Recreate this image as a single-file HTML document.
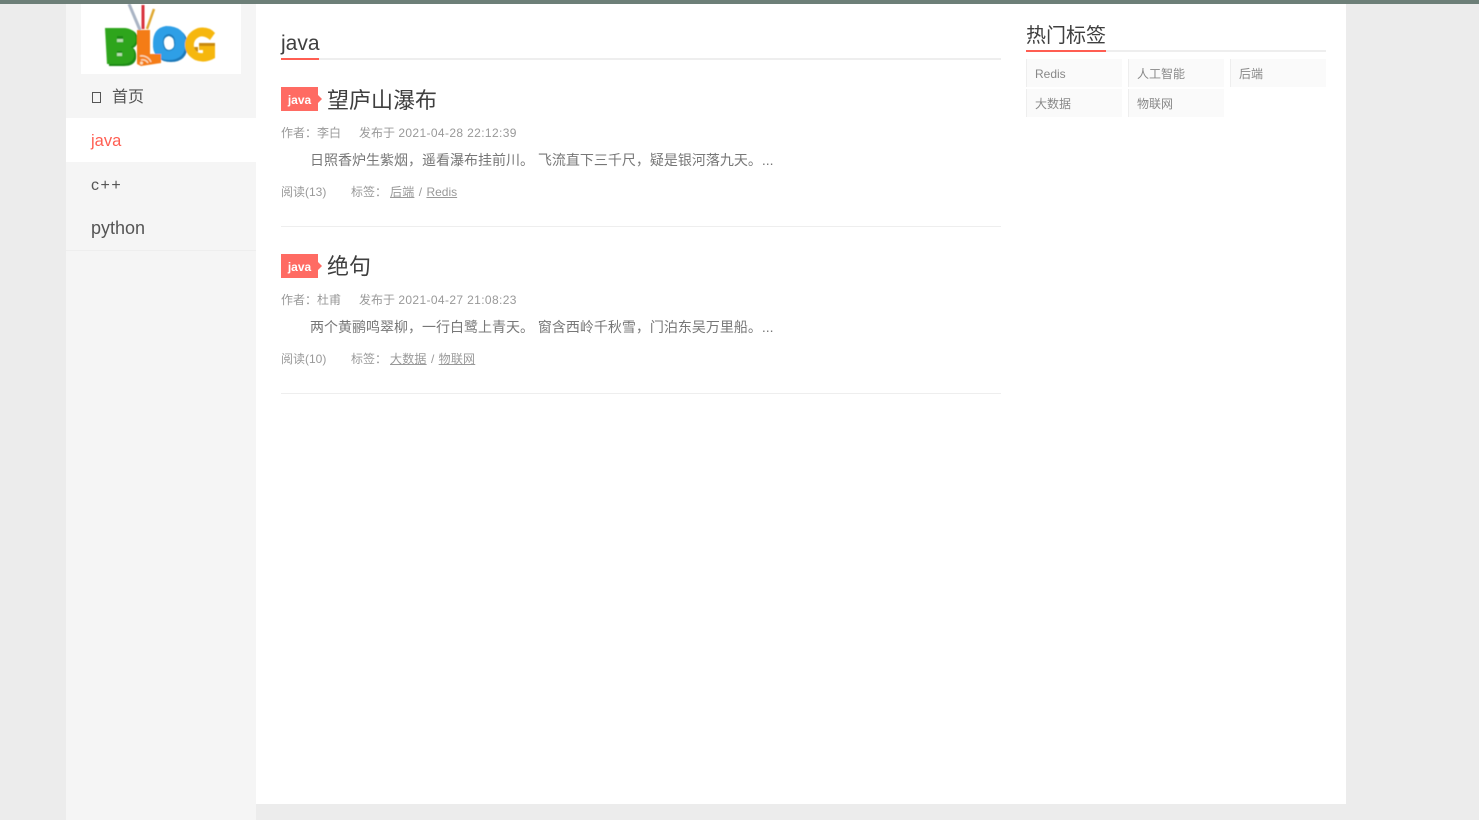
<!DOCTYPE html>
<html lang="zh">
<head>
<meta charset="utf-8">
<title>java</title>
<style>
html,body{margin:0;padding:0}
body{width:1479px;height:820px;overflow:hidden;background:#ececec;position:relative;font-family:"Liberation Sans","Noto Sans CJK SC",sans-serif;color:#555}
.a{position:absolute;white-space:nowrap}
#top{left:0;top:0;width:1479px;height:4px;background:#6d7f78}
#side{left:66px;top:4px;width:190px;height:816px;background:#f5f5f5}
#main{left:256px;top:4px;width:1090px;height:800px;background:#fff}
#logo{left:81px;top:4px;width:160px;height:70px;background:#fff;overflow:hidden}
.nav{left:91px;font-size:18px;line-height:24px;color:#555}
.bar{height:2px;background:#eee}
.red{height:2px;background:#ff5e52}
.tag{left:281px;width:37px;height:24px;background:#ff6b63;color:#fff;font-size:12px;font-weight:bold;line-height:26px;text-align:center}
.tag:after{content:"";position:absolute;left:37px;top:8px;border-left:4px solid #ff6b63;border-top:4px solid transparent;border-bottom:4px solid transparent}
.t{left:327px;font-size:22px;line-height:30px;color:#3f3f3f}
.m{font-size:12px;line-height:18px;color:#999}
.m a{color:#999;text-decoration:underline;letter-spacing:.2px}
.m i{font-style:normal;letter-spacing:.37px}
.m s{text-decoration:none;margin:0 1px 0 1px}
.d{left:310px;font-size:14px;line-height:20px;color:#777}
.hr{left:281px;width:720px;height:1px;background:#eee}
.h{font-size:12px;line-height:30px;color:#888;background:#fafafa;border-left:1px solid #eee;height:28px;width:95px;text-indent:8px}
</style>
</head>
<body>
<div class="a" id="top"></div>
<div class="a" id="side"></div>
<div class="a" id="main"></div>

<div class="a" id="logo">
<svg width="160" height="70" viewBox="0 0 160 70">
<defs><filter id="b"><feGaussianBlur stdDeviation=".45"/></filter></defs>
<g filter="url(#b)">
<path d="M48 0L59 26" stroke="#a9b4c4" stroke-width="3" fill="none"/>
<path d="M62 1L62 25" stroke="#d8333c" stroke-width="3" fill="none"/>
<path d="M73 5L66 25" stroke="#e0a830" stroke-width="2.5" fill="none"/>
<path fill-rule="evenodd" d="M87 24Q106 24 107 41Q106 58 90 58Q73 58 74 41Q74 26 87 24Z M88 32Q82 33 83 40Q84 46 88 46Q94 45 93 39Q93 33 88 32Z" fill="#1a78b8"/>
<path fill-rule="evenodd" d="M85 22Q104 22 105 39Q104 56 88 56Q71 56 72 39Q72 24 85 22Z M88 30Q81 31 82 40Q83 47 88 47Q95 46 94 38Q94 31 88 30Z" fill="#2e9fe6"/>
<path fill-rule="evenodd" d="M117 24Q128 22 134 29L129 36Q123 31 118 33Q112 36 113 43Q115 50 122 49V46H118V39H134V54Q124 60 114 56Q103 50 104 39Q106 28 117 24Z" fill="#f6b70e"/>
<path d="M113 43Q114 47 117 48V43Z M118 39H134V42H118Z" fill="#c98a0c"/>
<path d="M26 25H46Q57 26 57 37Q56 42 52 44Q56 47 55 55Q53 62 43 62H28Z" fill="#1c8a14"/>
<path fill-rule="evenodd" d="M24 24H44Q55 25 55 36Q54 41 50 43Q54 46 53 53Q51 60 41 60H26Z M36 32V38H42V32Z M36 47V52H41V47Z" fill="#2fa51b"/>
<path d="M36 35H42V38H36Z M36 49H41V52H36Z" fill="#b6deae"/>
<path d="M56 26H69V50H80V59L60 62L56 60Z" fill="#f47c12"/>
<path d="M60 56a6 6 0 0 1 7 3" stroke="#fbe0c0" stroke-width="1.300" fill="none"/>
<path d="M59 52a10 10 0 0 1 11 6" stroke="#fbe0c0" stroke-width="1.300" fill="none"/>
<circle cx="60.500" cy="59" r="1.500" fill="#fbe0c0"/>
</g>
</svg>
</div>

<div class="a" style="left:92px;top:92px;width:9px;height:11px;border:1.500px solid #555;box-sizing:border-box"></div>
<div class="a nav" style="left:112px;top:86px;font-size:16px">首页</div>
<div class="a" style="left:66px;top:118px;width:190px;height:44px;background:#fff"></div>
<div class="a nav" style="top:129px;color:#ff5e52;font-size:16.500px">java</div>
<div class="a nav" style="top:174px;font-size:16px;letter-spacing:1.500px">c++</div>
<div class="a nav" style="top:216px">python</div>
<div class="a" style="left:66px;top:250px;width:190px;height:1px;background:#eee"></div>

<div class="a" style="left:281px;top:29px;font-size:21px;line-height:30px;color:#3f3f3f">java</div>
<div class="a bar" style="left:281px;top:58px;width:720px"></div>
<div class="a red" style="left:281px;top:58px;width:38px"></div>

<div class="a tag" style="top:87px">java</div>
<div class="a t" style="top:86px">望庐山瀑布</div>
<div class="a m" style="left:281px;top:124px">作者：李白</div>
<div class="a m" style="left:359px;top:124px">发布于 <i>2021-04-28 22:12:39</i></div>
<div class="a d" style="top:150px">日照香炉生紫烟，遥看瀑布挂前川。 飞流直下三千尺，疑是银河落九天。...</div>
<div class="a m" style="left:281px;top:183px">阅读(13)</div>
<div class="a m" style="left:351px;top:183px">标签：</div>
<div class="a m" style="left:390px;top:183px"><a>后端</a> <s>/</s> <a style="letter-spacing:0">Redis</a></div>
<div class="a hr" style="top:226px"></div>

<div class="a tag" style="top:254px">java</div>
<div class="a t" style="top:252px">绝句</div>
<div class="a m" style="left:281px;top:291px">作者：杜甫</div>
<div class="a m" style="left:359px;top:291px">发布于 <i>2021-04-27 21:08:23</i></div>
<div class="a d" style="top:317px">两个黄鹂鸣翠柳，一行白鹭上青天。 窗含西岭千秋雪，门泊东吴万里船。...</div>
<div class="a m" style="left:281px;top:350px">阅读(10)</div>
<div class="a m" style="left:351px;top:350px">标签：</div>
<div class="a m" style="left:390px;top:350px"><a>大数据</a> <s>/</s> <a>物联网</a></div>
<div class="a hr" style="top:393px"></div>

<div class="a" style="left:1026px;top:21px;font-size:20px;line-height:30px;color:#3f3f3f">热门标签</div>
<div class="a bar" style="left:1026px;top:50px;width:300px"></div>
<div class="a red" style="left:1026px;top:50px;width:80px"></div>
<div class="a h" style="left:1026px;top:59px">Redis</div>
<div class="a h" style="left:1128px;top:59px">人工智能</div>
<div class="a h" style="left:1230px;top:59px">后端</div>
<div class="a h" style="left:1026px;top:89px">大数据</div>
<div class="a h" style="left:1128px;top:89px">物联网</div>
</body>
</html>
